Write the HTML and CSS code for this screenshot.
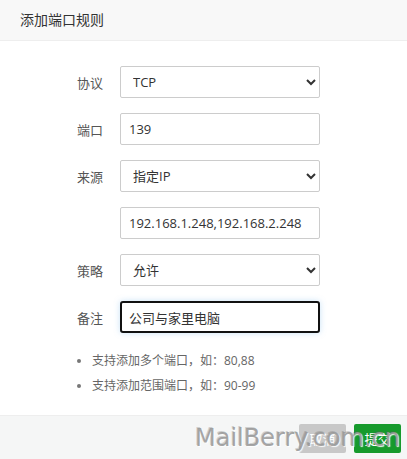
FILE: index.html
```html
<!doctype html>
<html lang="zh-CN">
  <head>
    <meta charset="UTF-8" />
    <meta name="viewport" content="width=device-width, initial-scale=1.0" />
    <title>添加端口规则</title>
    <link rel="stylesheet" href="styles.css">
  </head>
  <body>
    <div class="dialog">
      <div class="dialog-title">添加端口规则</div>

      <div class="dialog-body">
        <div class="form-row">
          <label class="form-label">协议</label>
          <select class="form-control">
            <option>TCP</option>
            <option>UDP</option>
          </select>
        </div>
        <div class="form-row">
          <label class="form-label">端口</label>
          <input class="form-control" type="text" value="139">
        </div>
        <div class="form-row">
          <label class="form-label">来源</label>
          <select class="form-control">
            <option>指定IP</option>
            <option>所有IP</option>
          </select>
        </div>
        <div class="form-row">
          <label class="form-label"></label>
          <input class="form-control" type="text" value="192.168.1.248,192.168.2.248">
        </div>
        <div class="form-row">
          <label class="form-label">策略</label>
          <select class="form-control">
            <option>允许</option>
            <option>禁止</option>
          </select>
        </div>
        <div class="form-row">
          <label class="form-label">备注</label>
          <input class="form-control focused" type="text" value="公司与家里电脑">
        </div>

        <ul class="tips">
          <li>支持添加多个端口，如：80,88</li>
          <li>支持添加范围端口，如：90-99</li>
        </ul>
      </div>

      <div class="dialog-footer">
        <button class="btn btn-cancel">取消</button>
        <button class="btn btn-submit">提交</button>
      </div>

      <div class="watermark">MailBerry.com.cn</div>
    </div>
  </body>
</html>
```

FILE: styles.css
```css
* {
  margin: 0;
  padding: 0;
  box-sizing: border-box;
}

body {
  font-family: "Open Sans", "Noto Sans CJK SC", sans-serif;
  background: #fff;
  color: #333;
  width: 407px;
  height: 459px;
  overflow: hidden;
}

.dialog {
  position: relative;
  height: 459px;
  display: flex;
  flex-direction: column;
}

.dialog-title {
  height: 41px;
  line-height: 40px;
  padding-left: 20px;
  font-size: 14px;
  color: #333;
  background: #f8f8f8;
  border-bottom: 1px solid #eee;
}

.dialog-body {
  flex: 1;
  padding-top: 25px;
}

.form-row {
  display: flex;
  align-items: center;
  margin-bottom: 15px;
}

.form-label {
  width: 120px;
  padding-left: 77px;
  font-size: 13px;
  color: #555;
}

.form-control {
  width: 200px;
  height: 32px;
  border: 1px solid #ccc;
  border-radius: 2px;
  background: #fff;
  font-family: "Open Sans", "Noto Sans CJK SC", sans-serif;
  font-size: 13px;
  color: #333;
  padding: 0 8px;
  outline: none;
}

select.form-control {
  padding-left: 8px;
  padding-right: 4px;
}

.form-control.focused {
  border: 2px solid #111;
  border-radius: 3px;
  padding: 0 7px;
  box-shadow: 0 0 6px rgba(102, 175, 233, 0.35);
}

.tips {
  list-style: none;
  padding-left: 77px;
  margin-top: 4px;
}

.tips li {
  position: relative;
  padding-left: 15px;
  font-size: 12px;
  color: #666;
  line-height: 25px;
}

.tips li::before {
  content: '';
  position: absolute;
  left: 0;
  top: 11px;
  width: 4px;
  height: 4px;
  border-radius: 50%;
  background: #777;
}

.dialog-footer {
  height: 44px;
  background: #f5f6f6;
  border-top: 1px solid #eee;
  display: flex;
  justify-content: flex-end;
  align-items: center;
  gap: 8px;
  padding-right: 6px;
}

.btn {
  width: 47px;
  height: 29px;
  border: none;
  border-radius: 2px;
  color: #fff;
  font-family: "Open Sans", "Noto Sans CJK SC", sans-serif;
  font-size: 13px;
  margin-top: 1px;
}

.btn-cancel {
  background: #c8c8c8;
}

.btn-submit {
  background: #169a2c;
}

.watermark {
  position: absolute;
  left: 195px;
  top: 424px;
  font-family: "DejaVu Sans", sans-serif;
  font-size: 24px;
  color: rgba(150, 150, 150, 0.85);
  text-shadow: 1px 1px 1px rgba(255, 255, 255, 0.9), -1px -1px 0 rgba(90, 90, 90, 0.25);
  pointer-events: none;
  white-space: nowrap;
}
```
